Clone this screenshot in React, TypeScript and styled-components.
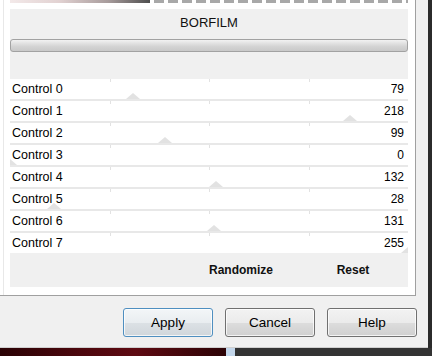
import styled, { createGlobalStyle } from "styled-components";

const GlobalStyle = createGlobalStyle`
  html, body {
    margin: 0;
    padding: 0;
  }
  body {
    background: #2d2d2d;
    font-family: "Liberation Sans", Arial, sans-serif;
    color: #000;
  }
`;

const controls = [79, 218, 99, 0, 132, 28, 131, 255];
const TRACK = 398;

const Screen = styled.div`
  width: 432px;
  height: 356px;
  display: flex;
  flex-direction: column;
  overflow: hidden;
`;

const Window = styled.div`
  display: flex;
  height: 348px;
`;

const DialogBody = styled.div`
  width: 428px;
  box-sizing: border-box;
  background: #f0f0f0;
  border-bottom: 1px solid #cfcfcf;
  display: flex;
  flex-direction: column;
`;

const RightFrame = styled.div`
  flex: 1;
  background: #2b2b2b;
`;

const Panel = styled.div`
  width: 416px;
  height: 296px;
  box-sizing: border-box;
  padding: 0 7px 0 10px;
  background: linear-gradient(
    to right,
    #fff 3px,
    #e8e8e8 3px,
    #e8e8e8 4px,
    #fff 4px
  );
  border-right: 1px solid #a0a0a0;
  border-bottom: 1px solid #a0a0a0;
  display: flex;
  flex-direction: column;
`;

const TopStrip = styled.div`
  height: 3px;
  margin-bottom: 6px;
  display: flex;
`;

const StripFade = styled.div`
  width: 140px;
  background: linear-gradient(
    to right,
    #f3e9e9 0%,
    #e2d2d2 35%,
    #a89c9c 70%,
    #4e4e4e 100%
  );
`;

const StripDashes = styled.div`
  flex: 1;
  background: repeating-linear-gradient(
    to right,
    #fff 0,
    #fff 4px,
    #a8a8a8 4px,
    #a8a8a8 14px
  );
`;

const HeaderBox = styled.div`
  height: 70px;
  box-sizing: border-box;
  padding-top: 6px;
  background: #f0f0f0;
  display: flex;
  flex-direction: column;
`;

const Title = styled.div`
  height: 16px;
  line-height: 16px;
  font-size: 13px;
  text-align: center;
  color: #111;
`;

const ProgressBar = styled.div`
  margin-top: 8px;
  height: 13px;
  box-sizing: border-box;
  border: 1px solid #a2a2a2;
  border-radius: 3px;
  background: linear-gradient(
    to bottom,
    #f2f2f2 0%,
    #e2e2e2 30%,
    #d3d3d3 60%,
    #c9c9c9 100%
  );
`;

const Rows = styled.div`
  display: flex;
  flex-direction: column;
`;

const Row = styled.div<{ $last: boolean }>`
  position: relative;
  overflow: hidden;
  box-sizing: border-box;
  height: ${(p) => (p.$last ? "20px" : "22px")};
  border-bottom: ${(p) => (p.$last ? "none" : "2px solid #e8e8e8")};
  padding: 0 4px 0 2px;
  display: flex;
  align-items: center;
  justify-content: space-between;
  font-size: 12.5px;
  background: #fff;
`;

const Label = styled.span`
  position: relative;
  z-index: 1;
`;

const Value = styled.span`
  position: relative;
  z-index: 1;
  font-size: 12px;
`;

const Tick = styled.div<{ $at: number }>`
  position: absolute;
  top: 0;
  left: ${(p) => p.$at * 100}%;
  width: 1px;
  height: 3px;
  background: #e2e2e2;
`;

const Thumb = styled.div`
  position: absolute;
  bottom: 0;
  width: 0;
  height: 0;
  border-left: 7px solid transparent;
  border-right: 7px solid transparent;
  border-bottom: 6px solid #e2e2e2;
`;

const ActionBox = styled.div`
  height: 34px;
  background: #f0f0f0;
  display: flex;
  justify-content: flex-end;
  align-items: center;
  gap: 20px;
  padding-right: 9px;
`;

const ActionCell = styled.div`
  width: 92px;
  text-align: center;
  font-size: 12px;
  font-weight: bold;
  color: #111;
`;

const ButtonRow = styled.div`
  display: flex;
  justify-content: flex-end;
  gap: 12px;
  padding: 12px 11px 0 0;
`;

const DialogButton = styled.button<{ $primary?: boolean }>`
  width: 90px;
  height: 29px;
  box-sizing: border-box;
  border-radius: 3px;
  border: 1px solid ${(p) => (p.$primary ? "#4f8fc0" : "#707070")};
  box-shadow: inset 0 0 0 1px rgba(255, 255, 255, 0.75);
  background: ${(p) =>
    p.$primary
      ? "linear-gradient(to bottom, #f3f6f8 0%, #e9edf0 50%, #dce1e5 51%, #d0d6db 100%)"
      : "linear-gradient(to bottom, #f2f2f2 0%, #ebebeb 50%, #dddddd 51%, #cfcfcf 100%)"};
  font-family: "Liberation Sans", Arial, sans-serif;
  font-size: 13.5px;
  color: #000;
  padding: 0;
`;

const BottomStrip = styled.div`
  height: 8px;
  display: flex;
`;

const ImageEdge = styled.div`
  width: 226px;
  background: linear-gradient(
    to right,
    #2a0205 0%,
    #4c070d 35%,
    #5e0a12 60%,
    #2c0306 100%
  );
`;

const TaskEdge = styled.div`
  width: 9px;
  background: #c3d6ea;
`;

const DarkEdge = styled.div`
  flex: 1;
  background: #333;
`;

export default function App() {
  return (
    <>
      <GlobalStyle />
      <Screen>
        <Window>
          <DialogBody>
            <Panel>
              <TopStrip>
                <StripFade />
                <StripDashes />
              </TopStrip>
              <HeaderBox>
                <Title>BORFILM</Title>
                <ProgressBar />
              </HeaderBox>
              <Rows>
                {controls.map((value, index) => (
                  <Row key={`control-${index}`} $last={index === controls.length - 1}>
                    <Tick $at={0.25} />
                    <Tick $at={0.5} />
                    <Tick $at={0.75} />
                    <Thumb style={{ left: (value / 255) * TRACK - 7 }} />
                    <Label>Control {index}</Label>
                    <Value>{value}</Value>
                  </Row>
                ))}
              </Rows>
              <ActionBox>
                <ActionCell>Randomize</ActionCell>
                <ActionCell>Reset</ActionCell>
              </ActionBox>
            </Panel>
            <ButtonRow>
              <DialogButton $primary>Apply</DialogButton>
              <DialogButton>Cancel</DialogButton>
              <DialogButton>Help</DialogButton>
            </ButtonRow>
          </DialogBody>
          <RightFrame />
        </Window>
        <BottomStrip>
          <ImageEdge />
          <TaskEdge />
          <DarkEdge />
        </BottomStrip>
      </Screen>
    </>
  );
}
